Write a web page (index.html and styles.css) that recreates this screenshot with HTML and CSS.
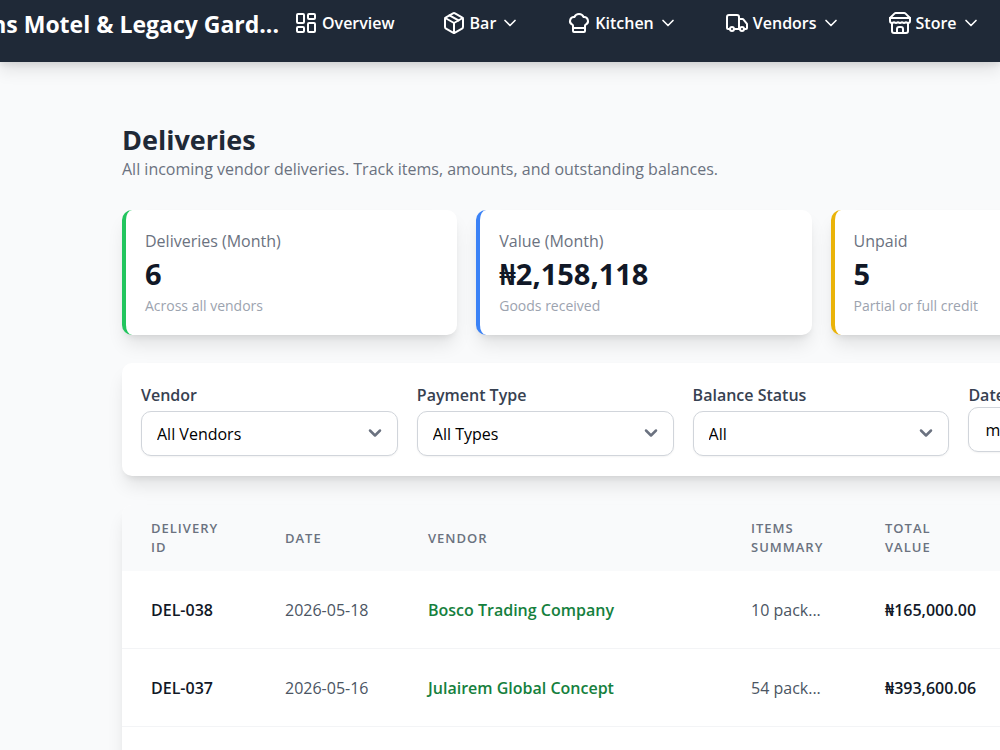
FILE: index.html
```html
<!DOCTYPE html>
<html lang="en">
<head>
<meta charset="utf-8">
<title>Deliveries</title>
<link rel="stylesheet" href="styles.css">
</head>
<body>
<header class="topbar">
  <div class="brand"><span>ns Motel &amp; Legacy Gard...</span></div>
  <nav class="nav">
    <a class="nav-item" href="#"><svg class="icon" viewBox="0 0 24 24"><rect x="3" y="3" width="7" height="9" rx="1"/><rect x="14" y="3" width="7" height="5" rx="1"/><rect x="14" y="12" width="7" height="9" rx="1"/><rect x="3" y="16" width="7" height="5" rx="1"/></svg>Overview</a>
    <button class="nav-item" type="button"><svg class="icon" viewBox="0 0 24 24"><path d="M11 21.73a2 2 0 0 0 2 0l7-4A2 2 0 0 0 21 16V8a2 2 0 0 0-1-1.73l-7-4a2 2 0 0 0-2 0l-7 4A2 2 0 0 0 3 8v8a2 2 0 0 0 1 1.73z"/><path d="M12 22V12"/><path d="M3.29 7 12 12l8.71-5"/><path d="m7.5 4.27 9 5.15"/></svg>Bar<svg class="chevron" viewBox="0 0 24 24"><path d="m6 9 6 6 6-6"/></svg></button>
    <button class="nav-item" type="button"><svg class="icon" viewBox="0 0 24 24"><path d="M17 21a1 1 0 0 0 1-1v-5.35c0-.457.316-.844.727-1.041a4 4 0 0 0-2.134-7.589 5 5 0 0 0-9.186 0 4 4 0 0 0-2.134 7.588c.411.198.727.585.727 1.041V20a1 1 0 0 0 1 1Z"/><path d="M6 17h12"/></svg>Kitchen<svg class="chevron" viewBox="0 0 24 24"><path d="m6 9 6 6 6-6"/></svg></button>
    <button class="nav-item" type="button"><svg class="icon" viewBox="0 0 24 24"><path d="M14 18V6a2 2 0 0 0-2-2H4a2 2 0 0 0-2 2v11a1 1 0 0 0 1 1h2"/><path d="M15 18H9"/><path d="M19 18h2a1 1 0 0 0 1-1v-3.65a1 1 0 0 0-.22-.624l-3.48-4.35A1 1 0 0 0 17.52 8H14"/><circle cx="17" cy="18" r="2"/><circle cx="7" cy="18" r="2"/></svg>Vendors<svg class="chevron" viewBox="0 0 24 24"><path d="m6 9 6 6 6-6"/></svg></button>
    <button class="nav-item" type="button"><svg class="icon" viewBox="0 0 24 24"><path d="m2 7 4.41-4.41A2 2 0 0 1 7.83 2h8.34a2 2 0 0 1 1.42.59L22 7"/><path d="M4 12v8a2 2 0 0 0 2 2h12a2 2 0 0 0 2-2v-8"/><path d="M15 22v-4a2 2 0 0 0-2-2h-2a2 2 0 0 0-2 2v4"/><path d="M2 7h20"/><path d="M22 7v3a2 2 0 0 1-2 2a2.7 2.7 0 0 1-1.59-.63.7.7 0 0 0-.82 0A2.7 2.7 0 0 1 16 12a2.7 2.7 0 0 1-1.59-.63.7.7 0 0 0-.82 0A2.7 2.7 0 0 1 12 12a2.7 2.7 0 0 1-1.59-.63.7.7 0 0 0-.82 0A2.7 2.7 0 0 1 8 12a2.7 2.7 0 0 1-1.59-.63.7.7 0 0 0-.82 0A2.7 2.7 0 0 1 4 12a2 2 0 0 1-2-2V7"/></svg>Store<svg class="chevron" viewBox="0 0 24 24"><path d="m6 9 6 6 6-6"/></svg></button>
  </nav>
</header>
<main class="page">
  <div class="content">
    <div class="heading">
      <h1>Deliveries</h1>
      <p>All incoming vendor deliveries. Track items, amounts, and outstanding balances.</p>
    </div>
    <section class="stats">
      <article class="stat stat-green">
        <p class="stat-label">Deliveries (Month)</p>
        <p class="stat-value">6</p>
        <p class="stat-note">Across all vendors</p>
      </article>
      <article class="stat stat-blue">
        <p class="stat-label">Value (Month)</p>
        <p class="stat-value">₦2,158,118</p>
        <p class="stat-note">Goods received</p>
      </article>
      <article class="stat stat-yellow">
        <p class="stat-label">Unpaid</p>
        <p class="stat-value">5</p>
        <p class="stat-note">Partial or full credit</p>
      </article>
    </section>
    <form class="filters">
      <div class="field">
        <label for="vendor">Vendor</label>
        <div class="select-wrap"><select id="vendor"><option>All Vendors</option></select><svg class="select-arrow" viewBox="0 0 24 24"><path d="m6 9 6 6 6-6"/></svg></div>
      </div>
      <div class="field">
        <label for="payment">Payment Type</label>
        <div class="select-wrap"><select id="payment"><option>All Types</option></select><svg class="select-arrow" viewBox="0 0 24 24"><path d="m6 9 6 6 6-6"/></svg></div>
      </div>
      <div class="field">
        <label for="balance">Balance Status</label>
        <div class="select-wrap"><select id="balance"><option>All</option></select><svg class="select-arrow" viewBox="0 0 24 24"><path d="m6 9 6 6 6-6"/></svg></div>
      </div>
      <div class="field field-date">
        <label for="date">Date</label>
        <input id="date" type="date">
      </div>
    </form>
    <section class="table-card">
      <table>
        <colgroup><col class="col-id"><col class="col-date"><col class="col-vendor"><col class="col-items"><col></colgroup>
        <thead>
          <tr><th>Delivery ID</th><th>Date</th><th>Vendor</th><th>Items Summary</th><th>Total<br>Value</th></tr>
        </thead>
        <tbody>
          <tr><td class="strong">DEL-038</td><td>2026-05-18</td><td><a class="vendor-link" href="#">Bosco Trading Company</a></td><td>10 pack...</td><td class="strong">₦165,000.00</td></tr>
          <tr><td class="strong">DEL-037</td><td>2026-05-16</td><td><a class="vendor-link" href="#">Julairem Global Concept</a></td><td>54 pack...</td><td class="strong">₦393,600.06</td></tr>
        </tbody>
      </table>
    </section>
  </div>
</main>
</body>
</html>
```
FILE: styles.css
```css
* { box-sizing: border-box; }
html { overflow: hidden; }
body {
  margin: 0;
  background: #f9fafb;
  color: #1f2937;
  font: 16px/24px "Open Sans", "Noto Sans", sans-serif;
}
h1, p { margin: 0; }
button, select, input { font: inherit; }

.topbar {
  display: flex;
  align-items: flex-start;
  gap: 15px;
  padding: 8px 0 22px;
  background: #1f2937;
  color: #fff;
  box-shadow: 0 8px 16px rgba(0, 0, 0, .1), 0 3px 6px rgba(0, 0, 0, .08);
}
.brand {
  display: flex;
  flex: 0 0 279px;
  justify-content: flex-end;
  overflow: hidden;
  font-size: 23px;
  font-weight: 700;
  line-height: 32px;
  white-space: nowrap;
}
.nav { display: flex; gap: 47px; }
.nav-item {
  display: flex;
  align-items: center;
  gap: 4px;
  padding: 0;
  border: 0;
  background: none;
  color: #fff;
  font-weight: 600;
  line-height: 30px;
  text-decoration: none;
  white-space: nowrap;
}
svg {
  flex: none;
  fill: none;
  stroke: currentColor;
  stroke-width: 2;
  stroke-linecap: round;
  stroke-linejoin: round;
}
.icon { width: 24px; height: 24px; }
.chevron { width: 20px; height: 20px; }

.page { padding: 60px 122px; }
.content { min-width: 1398px; }
.heading { margin-bottom: 29px; }
h1 { font-size: 27px; font-weight: 700; line-height: 35px; }
.heading p { color: #6b7280; }

.stats {
  display: grid;
  grid-template-columns: repeat(4, 1fr);
  gap: 19px;
  margin-bottom: 28px;
}
.stat, .filters, .table-card {
  border-radius: 10px;
  background: #fff;
  box-shadow: 0 12px 18px -3px rgba(0, 0, 0, .1), 0 5px 7px -4px rgba(0, 0, 0, .1);
}
.stat { padding: 19px; border-left: 4px solid; }
.stat-green { border-color: #22c55e; }
.stat-blue { border-color: #3b82f6; }
.stat-yellow { border-color: #eab308; }
.stat-label { color: #6b7280; }
.stat-value {
  margin: 4px 0;
  color: #111827;
  font-size: 29px;
  font-weight: 700;
  line-height: 34px;
}
.stat-note { color: #9ca3af; font-size: 14px; line-height: 21px; }

.filters {
  display: grid;
  grid-template-columns: repeat(5, 1fr);
  gap: 19px;
  margin-bottom: 29px;
  padding: 20px 19px;
}
.field { display: flex; flex-direction: column; gap: 4px; }
.field-date { gap: 0; }
.field label { color: #374151; font-weight: 600; }
.select-wrap { position: relative; display: grid; }
.field select, .field input {
  width: 100%;
  height: 45px;
  padding: 0 15px;
  border: 1px solid #d1d5db;
  border-radius: 10px;
  background: #fff;
  color: #000;
  appearance: none;
  box-shadow: 0 1px 2px rgba(0, 0, 0, .05);
}
.select-arrow {
  position: absolute;
  top: 12px;
  right: 13px;
  width: 20px;
  height: 20px;
  color: #6b7280;
  stroke-width: 3;
  pointer-events: none;
}

.table-card { padding-bottom: 60px; overflow: hidden; }
table { width: 100%; border-collapse: separate; border-spacing: 0; table-layout: fixed; }
.col-id { width: 134px; }
.col-date { width: 143px; }
.col-vendor { width: 323px; }
.col-items { width: 134px; }
th, td { padding: 0 0 0 29px; text-align: left; }
th {
  height: 66px;
  padding-right: 24px;
  background: #f9fafb;
  color: #6b7280;
  font-size: 13px;
  font-weight: 600;
  line-height: 19px;
  letter-spacing: 1px;
  text-transform: uppercase;
}
td {
  height: 78px;
  border-bottom: 1px solid #f3f4f6;
  color: #4b5563;
  white-space: nowrap;
}
.strong { color: #111827; font-weight: 600; }
.vendor-link { color: #15803d; font-weight: 600; text-decoration: none; }
```
